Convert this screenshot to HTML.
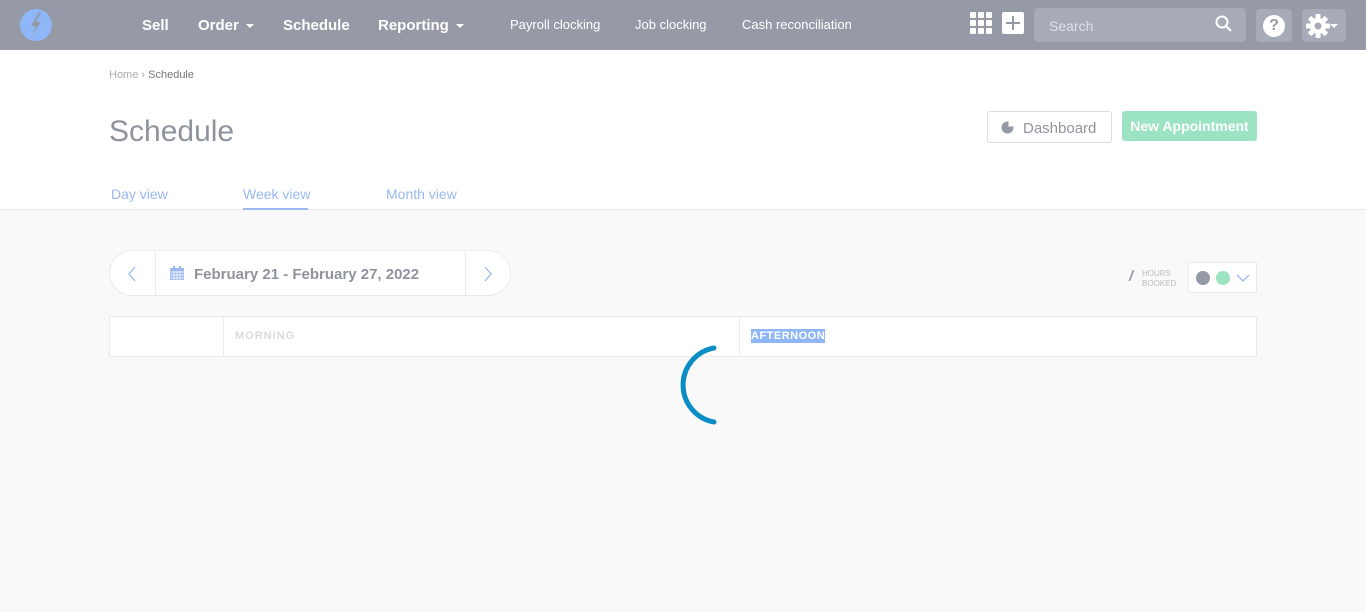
<!DOCTYPE html>
<html><head><style>
*{box-sizing:border-box;margin:0;padding:0}
body{width:1366px;height:612px;overflow:hidden;background:#f9f9f9;font-family:"Liberation Sans",sans-serif;position:relative}
.nav{position:absolute;top:0;left:0;width:1366px;height:50px;background:#959aa6;color:#fff}
.nav .t{position:absolute;top:17px;font-size:15px;font-weight:bold}
.nav .s{position:absolute;top:17px;font-size:13px}
.caret{display:inline-block;border-left:4px solid transparent;border-right:4px solid transparent;border-top:4px solid #fff;vertical-align:middle;margin-left:7px}
.white{position:absolute;top:50px;left:0;width:1366px;height:160px;background:#fff;border-bottom:1px solid #e8e8e8}
.abs{position:absolute}
</style></head><body>
<div class="nav">
<svg class="abs" style="left:20px;top:9px" width="32" height="32" viewBox="0 0 32 32"><circle cx="16" cy="16" r="16" fill="#8fb7f8"/><path d="M19 3 L11 17 L16 17 L12 26 L21 13 L16 13 L21 3Z" fill="#959aa6"/></svg>
<div class="t" style="left:142px">Sell</div>
<div class="t" style="left:198px">Order<span class="caret"></span></div>
<div class="t" style="left:283px">Schedule</div>
<div class="t" style="left:378px">Reporting<span class="caret"></span></div>
<div class="s" style="left:510px">Payroll clocking</div>
<div class="s" style="left:635px">Job clocking</div>
<div class="s" style="left:742px">Cash reconciliation</div>
<svg class="abs" style="left:970px;top:12px" width="22" height="22"><g fill="#fff"><rect x="0" y="0" width="6" height="6" rx="1"/><rect x="8" y="0" width="6" height="6" rx="1"/><rect x="16" y="0" width="6" height="6" rx="1"/><rect x="0" y="8" width="6" height="6" rx="1"/><rect x="8" y="8" width="6" height="6" rx="1"/><rect x="16" y="8" width="6" height="6" rx="1"/><rect x="0" y="16" width="6" height="6" rx="1"/><rect x="8" y="16" width="6" height="6" rx="1"/><rect x="16" y="16" width="6" height="6" rx="1"/></g></svg>
<div class="abs" style="left:1002px;top:12px;width:22px;height:22px;background:#fff;border-radius:2px"><div class="abs" style="left:10px;top:4px;width:2px;height:14px;background:#959aa6"></div><div class="abs" style="left:4px;top:10px;width:14px;height:2px;background:#959aa6"></div></div>
<div class="abs" style="left:1034px;top:8px;width:212px;height:34px;background:#a7abb8;border-radius:4px"><span class="abs" style="left:15px;top:10px;font-size:14px;color:#dfe1e6">Search</span>
<svg class="abs" style="left:181px;top:7px" width="18" height="18"><circle cx="7" cy="7" r="5.5" stroke="#fff" stroke-width="2" fill="none"/><path d="M11 11 L16 16" stroke="#fff" stroke-width="2"/></svg></div>
<div class="abs" style="left:1256px;top:9px;width:36px;height:33px;background:#a7abb8;border-radius:4px"><div class="abs" style="left:7px;top:6px;width:22px;height:22px;border-radius:50%;background:#fff;color:#959aa6;font-weight:bold;font-size:16px;text-align:center;line-height:22px">?</div></div>
<div class="abs" style="left:1302px;top:9px;width:44px;height:33px;background:#a7abb8;border-radius:4px">
<svg class="abs" style="left:4px;top:5px" width="24" height="24" viewBox="0 0 24 24"><g fill="#fff"><circle cx="12" cy="12" r="8"/><rect x="9.5" y="0" width="5" height="24" rx="1"/><rect x="9.5" y="0" width="5" height="24" rx="1" transform="rotate(45 12 12)"/><rect x="9.5" y="0" width="5" height="24" rx="1" transform="rotate(90 12 12)"/><rect x="9.5" y="0" width="5" height="24" rx="1" transform="rotate(135 12 12)"/></g><circle cx="12" cy="12" r="3.5" fill="#a7abb8"/></svg>
<span class="caret abs" style="left:28px;top:15px;margin:0"></span></div>
</div>
<div class="white">
<div class="abs" style="left:109px;top:19px;font-size:11px;color:#aaa">Home › <span style="color:#777">Schedule</span></div>
<div class="abs" style="left:109px;top:65px;font-size:30px;color:#8e939e">Schedule</div>
<div class="abs" style="left:987px;top:61px;width:125px;height:32px;border:1px solid #ddd;border-radius:3px;background:#fff">
<svg class="abs" style="left:13px;top:9px" width="13" height="13"><circle cx="6.5" cy="6.5" r="6" fill="#959aa6"/><path d="M7.5 0.5 L7.5 5.5 L12.5 5.5 A6 6 0 0 0 7.5 0.5Z" fill="#fff"/></svg>
<span class="abs" style="left:35px;top:8px;font-size:15px;color:#8e939e">Dashboard</span></div>
<div class="abs" style="left:1122px;top:61px;width:135px;height:30px;background:#9ce3c3;border-radius:3px;color:#fff;font-weight:bold;font-size:14px;text-align:center;line-height:30px">New Appointment</div>
<div class="abs" style="left:111px;top:136px;font-size:14px;color:#9bb9ef">Day view</div>
<div class="abs" style="left:243px;top:136px;font-size:14px;color:#9bb9ef">Week view</div>
<div class="abs" style="left:243px;top:158px;width:65px;height:2px;background:#9bb9ef"></div>
<div class="abs" style="left:386px;top:136px;font-size:14px;color:#9bb9ef">Month view</div>
</div>
<div class="abs" style="left:109px;top:250px;width:402px;height:46px;background:#fff;border:1px solid #ebebeb;border-radius:23px">
<div class="abs" style="left:45px;top:0;width:1px;height:44px;background:#ebebeb"></div>
<div class="abs" style="left:355px;top:0;width:1px;height:44px;background:#ebebeb"></div>
<svg class="abs" style="left:17px;top:15px" width="10" height="16"><path d="M8 1 L2 8 L8 15" stroke="#9bb9ef" fill="none" stroke-width="1.3"/></svg>
<svg class="abs" style="left:373px;top:15px" width="10" height="16"><path d="M2 1 L8 8 L2 15" stroke="#9bb9ef" fill="none" stroke-width="1.3"/></svg>
<svg class="abs" style="left:60px;top:15px" width="14" height="14"><rect x="0" y="2" width="14" height="12" fill="#9bb9ef"/><rect x="3" y="0" width="2" height="3" fill="#9bb9ef"/><rect x="9" y="0" width="2" height="3" fill="#9bb9ef"/><path d="M0 6H14M0 9H14M0 12H14M4 5V14M7 5V14M10 5V14" stroke="#fff" stroke-width="0.7"/></svg>
<span class="abs" style="left:84px;top:15px;font-size:15px;color:#8e939e;font-weight:bold">February 21 - February 27, 2022</span></div>
<div class="abs" style="left:1129px;top:268px;font-size:15px;color:#959aa6;font-style:italic;font-weight:bold">/</div>
<div class="abs" style="left:1142px;top:269px;font-size:8px;line-height:10px;color:#bbb">HOURS<br>BOOKED</div>
<div class="abs" style="left:1188px;top:262px;width:69px;height:31px;background:#fff;border:1px solid #ebebeb">
<div class="abs" style="left:7px;top:8px;width:14px;height:14px;border-radius:50%;background:#959aa6"></div>
<div class="abs" style="left:27px;top:8px;width:14px;height:14px;border-radius:50%;background:#9ce3c3"></div>
<svg class="abs" style="left:47px;top:10px" width="14" height="10"><path d="M1 2 L7 8 L13 2" stroke="#9bb9ef" fill="none" stroke-width="1.3"/></svg></div>
<div class="abs" style="left:109px;top:316px;width:1148px;height:41px;background:#fff;border:1px solid #ebebeb">
<div class="abs" style="left:113px;top:0;width:1px;height:39px;background:#ebebeb"></div>
<div class="abs" style="left:629px;top:0;width:1px;height:39px;background:#ebebeb"></div>
<span class="abs" style="left:125px;top:13px;font-size:11px;font-weight:bold;color:#d8dbe2;letter-spacing:1px">MORNING</span>
<span class="abs" style="left:641px;top:12px;font-size:11px;font-weight:bold;color:#fff;background:#8fb7f8;letter-spacing:0.5px;padding:1px 0">AFTERNOON</span></div>
<svg class="abs" style="left:670px;top:342px" width="60" height="88"><path d="M44 6 A37.6 37.6 0 0 0 44 80" stroke="#0a8cc4" stroke-width="5" fill="none" stroke-linecap="round"/></svg>
</body></html>
